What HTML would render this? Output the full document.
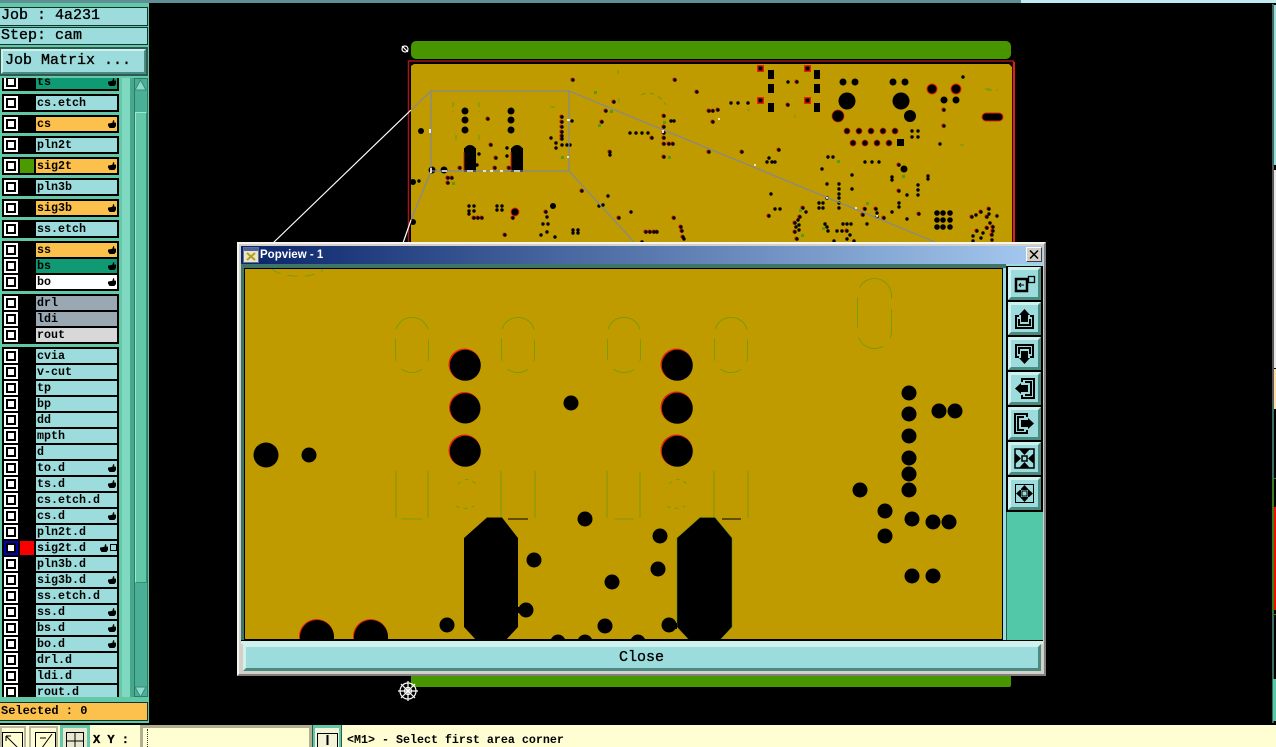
<!DOCTYPE html>
<html><head><meta charset="utf-8"><title>Popview</title>
<style>
html,body{margin:0;padding:0;width:1276px;height:747px;overflow:hidden;background:#000}
body{position:relative;font-family:"Liberation Mono",monospace;color:#000}
div{position:absolute;box-sizing:border-box}
svg{position:absolute;display:block}
.t{white-space:pre;font-size:15px;line-height:18px;-webkit-text-stroke:.35px #000}
.f{left:2px;width:117px;background:#000}
.r{left:36px;width:81px;height:14px;background:#9cdcdc;font-size:11.67px;font-weight:bold;line-height:15px;padding-left:1px;white-space:pre;overflow:hidden}
.o{background:#fcc04c}.g{background:#0f9a74}.w{background:#fff}.s{background:#9aa8b4}.l{background:#d8d8d8}
.h::after{content:"";position:absolute;right:1px;top:3px;width:8px;height:8px;background:#000;clip-path:polygon(0 45%,55% 35%,65% 0,80% 10%,75% 30%,100% 35%,100% 75%,80% 100%,20% 100%,0 70%)}
.c{left:4px;width:14px;height:14px;background:#fff;border:2px solid #fff}
.c::after{content:"";position:absolute;left:0;top:0;width:10px;height:10px;border:2px solid #000;box-sizing:border-box;background:#fff}
.b{left:1008px;width:33px;height:33px;background:#9cdcdc;border:3px solid;border-color:#cff2ee #4a8a80 #4a8a80 #cff2ee}
.b svg{left:-3px;top:-3px}
.tb{top:725px;height:22px;background:#fefed2}
</style></head>
<body>
<div style="left:0;top:0;width:1021px;height:3px;background:#5f8f94"></div>
<div style="left:1021px;top:0;width:255px;height:3px;background:#c0ecf0"></div>

<svg width="1276" height="747" viewBox="0 0 1276 747" style="left:0;top:0">
<rect x="411" y="41" width="600" height="18" rx="5" fill="#479600"/>
<rect x="411" y="670" width="600" height="17" rx="2" fill="#479600"/>
<rect x="408.5" y="61" width="605" height="190" fill="none" stroke="#a01818" stroke-width="1.500"/>
<rect x="1013" y="62" width="2" height="190" fill="#e02010"/>
<path d="M411 66 L414 64 H1009 L1012 67 V250 H411Z" fill="#c09b00"/>
<rect x="464" y="148" width="12" height="24" fill="#000"/><circle cx="470" cy="151" r="6" fill="#000"/>
<rect x="511" y="148" width="12" height="24" fill="#000"/><circle cx="517" cy="151" r="6" fill="#000"/>
<path d="M464 152V171" stroke="#d02010" fill="none"/><path d="M511 152V171" stroke="#d02010" fill="none"/>
<g fill="#e02010"><rect x="757" y="65" width="7" height="7"/><rect x="804" y="65" width="7" height="7"/><rect x="757" y="97" width="7" height="7"/><rect x="804" y="97" width="7" height="7"/></g>
<g fill="#000">
<rect x="758.500" y="66.500" width="4" height="4"/><rect x="805.500" y="66.500" width="4" height="4"/><rect x="758.500" y="98.500" width="4" height="4"/><rect x="805.500" y="98.500" width="4" height="4"/>
<rect x="768" y="70" width="6" height="9"/><rect x="768" y="84" width="6" height="9"/><rect x="768" y="103" width="6" height="9"/>
<rect x="814" y="70" width="6" height="9"/><rect x="814" y="84" width="6" height="9"/><rect x="814" y="103" width="6" height="9"/>
<rect x="897" y="139" width="7" height="7"/>
<rect x="982" y="113" width="21" height="8" rx="4" stroke="#e02010"/>
</g>
<g fill="none" stroke-linecap="round">
<path stroke="#d02a10" stroke-width="4.200" transform="translate(-.6,-.4)" d="M573 80h0M675 80h0M697 92h0M614 102h0M606 111h0M709 111h0M713 111h0M718 110h0M602 122h0M713 122h0M664 116h0M664 127h0M664 133h0M664 138h0M664 144h0M669 144h0M673 144h0M664 157h0M652 138h0M610 152h0M709 152h0M488 119h0M562 117h0M562 122h0M562 127h0M562 132h0M562 136h0M562 139h0M491 145h0M496 158h0M460 168h0M495 168h0M509 168h0M448 178h0M452 178h0M448 183h0M474 218h0M478 218h0M482 218h0M513 218h0M546 212h0M505 235h0M582 191h0M619 218h0M674 218h0M681 227h0M682 231h0M683 237h0M646 232h0M650 232h0M654 232h0M657 232h0M797 82h0M788 105h0M944 110h0M944 126h0M742 152h0M779 150h0M769 216h0M803 208h0M800 217h0M795 223h0M795 232h0M797 239h0M899 165h0M899 191h0M919 214h0M876 209h0M865 209h0M863 215h0M884 218h0M847 231h0M972 217h0M981 212h0M989 209h0M987 217h0M993 227h0M987 228h0M993 231h0M992 235h0M977 231h0"/>
<path stroke="#000" stroke-width="3.400" d="M573 80h0M675 80h0M697 92h0M614 102h0M606 111h0M709 111h0M713 111h0M718 110h0M602 122h0M713 122h0M671 121h0M674 121h0M664 116h0M664 127h0M664 133h0M664 138h0M664 144h0M669 144h0M673 144h0M664 157h0M630 133h0M636 133h0M642 133h0M648 133h0M652 138h0M610 152h0M610 155h0M709 152h0M488 119h0M562 117h0M562 122h0M562 127h0M562 132h0M562 136h0M562 139h0M572 121h0M551 138h0M556 143h0M556 148h0M562 145h0M567 145h0M570 145h0M491 145h0M507 148h0M479 154h0M507 156h0M496 158h0M477 165h0M460 168h0M495 168h0M509 168h0M448 178h0M452 178h0M448 183h0M419 181h0M469 206h0M474 206h0M469 211h0M474 211h0M469 214h0M474 218h0M478 218h0M482 218h0M497 206h0M502 206h0M497 210h0M502 210h0M513 218h0M546 212h0M547 217h0M543 224h0M548 224h0M547 232h0M541 235h0M555 237h0M573 230h0M578 230h0M573 233h0M578 233h0M505 235h0M582 191h0M608 196h0M599 206h0M603 205h0M631 212h0M619 218h0M674 218h0M681 227h0M682 231h0M683 237h0M684 239h0M646 232h0M650 232h0M654 232h0M657 232h0M642 242h0M788 82h0M797 82h0M731 103h0M738 103h0M748 103h0M788 105h0M963 77h0M944 110h0M944 126h0M940 144h0M912 131h0M918 131h0M912 137h0M918 137h0M742 152h0M779 150h0M769 158h0M767 162h0M772 162h0M775 162h0M828 157h0M833 157h0M822 169h0M865 162h0M872 162h0M879 162h0M852 175h0M827 184h0M839 184h0M839 189h0M839 194h0M839 198h0M839 203h0M839 208h0M852 189h0M771 194h0M827 198h0M819 203h0M823 203h0M819 208h0M823 208h0M775 209h0M780 209h0M769 216h0M803 208h0M806 212h0M800 217h0M798 220h0M799 225h0M795 223h0M796 227h0M795 232h0M799 230h0M797 239h0M899 165h0M892 177h0M892 180h0M928 176h0M928 179h0M899 191h0M907 195h0M918 185h0M918 190h0M918 195h0M899 203h0M899 207h0M892 212h0M907 219h0M919 214h0M876 209h0M877 213h0M877 217h0M865 209h0M863 215h0M884 218h0M867 224h0M825 224h0M827 227h0M828 231h0M843 224h0M847 224h0M851 224h0M837 231h0M842 231h0M847 231h0M850 235h0M847 239h0M854 241h0M834 241h0M972 217h0M976 215h0M981 212h0M989 209h0M989 214h0M987 217h0M990 223h0M993 227h0M987 228h0M993 231h0M992 235h0M992 240h0M983 233h0M977 231h0M973 236h0M973 241h0M981 238h0M997 216h0"/>
</g>
<g fill="#000">
<circle cx="465" cy="111" r="3.5"/><circle cx="465" cy="120" r="3.5"/><circle cx="465" cy="130" r="3.5"/>
<circle cx="511" cy="111" r="3.5"/><circle cx="511" cy="120" r="3.5"/><circle cx="511" cy="130" r="3.5"/>
<circle cx="421" cy="131" r="3"/><circle cx="432" cy="170" r="3.5"/><circle cx="444" cy="170" r="3.5"/>
<circle cx="413" cy="182" r="3"/><circle cx="413" cy="222" r="3"/><circle cx="553" cy="206" r="3"/>
<circle cx="515" cy="212" r="4" stroke="#e02010"/>
<circle cx="843" cy="82" r="3.5"/><circle cx="855" cy="82" r="3.5"/><circle cx="893" cy="82" r="3.5"/><circle cx="905" cy="82" r="3.5"/>
<circle cx="847" cy="101" r="8.5"/><circle cx="901" cy="101" r="8.5"/>
<circle cx="838" cy="116" r="6" stroke="#d02010" stroke-width=".7"/><circle cx="910" cy="116" r="6"/>
<circle cx="932" cy="89" r="5" stroke="#e02010"/><circle cx="956" cy="89" r="5" stroke="#e02010"/>
<circle cx="944" cy="100" r="3.5"/><circle cx="956" cy="100" r="3.5"/>
<g stroke="#d02010" stroke-width=".8"><circle cx="847" cy="131" r="3"/><circle cx="859" cy="131" r="3"/><circle cx="871" cy="131" r="3"/><circle cx="883" cy="131" r="3"/><circle cx="895" cy="131" r="3"/>
<circle cx="853" cy="143" r="3"/><circle cx="865" cy="143" r="3"/><circle cx="877" cy="143" r="3"/><circle cx="889" cy="143" r="3"/></g>
<circle cx="904" cy="169" r="3.5"/>
<circle cx="937" cy="213" r="2.8"/><circle cx="943" cy="213" r="2.8"/><circle cx="950" cy="213" r="2.8"/><circle cx="937" cy="220" r="2.8"/><circle cx="943" cy="220" r="2.8"/><circle cx="950" cy="220" r="2.8"/><circle cx="937" cy="227" r="2.8"/><circle cx="943" cy="227" r="2.8"/><circle cx="950" cy="227" r="2.8"/>
</g>
<g fill="#5a9a10"><rect x="594" y="91" width="3" height="3"/><rect x="610" y="110" width="3" height="3"/><rect x="598" y="124" width="3" height="3"/><rect x="561" y="156" width="3" height="3"/><rect x="668" y="156" width="3" height="3"/><rect x="663" y="121" width="3" height="3"/><rect x="452" y="182" width="3" height="3"/><rect x="837" y="160" width="3" height="3"/><rect x="902" y="175" width="3" height="3"/><rect x="866" y="202" width="3" height="3"/><rect x="799" y="209" width="3" height="3"/><rect x="801" y="234" width="3" height="3"/><rect x="822" y="227" width="3" height="3"/></g>
<g fill="none" stroke="#6a9a10" stroke-dasharray="5 4">
<path d="M453 102V112M479 102V112M456 135V143M479 135V143M618 70V74M641 95C650 90 660 95 666 105M619 98V104M985 89H990M987 90H998M960 145H964M747 110H750M795 115V118M550 107H555"/>
</g>
<g fill="none" stroke="#808898" stroke-width="1.2">
<rect x="431" y="91" width="138" height="80"/>
<path d="M569 91L935 242M569 171L635 243M431 91L411 110M431 171L411 220"/>
</g>
<g fill="none" stroke="#fff" stroke-width="1.2"><path d="M411 110L273 243M411 220L403 243"/></g>
<path d="M430 129v4M431 168v5M442 171h5M467 171h6M483 171h3M490 171h3M500 171h3M514 171h6M567 120h3M567 157h2M718 119h2M663 130v3M754 165h2M826 198h2M855 208h2M876 216h2" stroke="#fff" stroke-width="1.6" fill="none"/>
<g fill="none" stroke="#fff" stroke-width="1.2"><circle cx="405" cy="49" r="3"/><path d="M402 46l6 6"/>
<circle cx="408" cy="691" r="8"/><circle cx="408" cy="691" r="3.5"/><path d="M408 681v20M398 691h20M401 684l14 14M415 684l-14 14"/></g>
</svg>

<!-- right strip -->
<div style="left:1272px;top:4px;width:2px;height:719px;background:#3d6b62"></div>
<div style="left:1274px;top:5px;width:2px;height:160px;background:#9cdcdc"></div>
<div style="left:1272px;top:166px;width:2px;height:238px;background:#5a5a5a"></div>
<div style="left:1274px;top:170px;width:2px;height:198px;background:#e8e8e8"></div>
<div style="left:1274px;top:369px;width:2px;height:40px;background:#ffe0a8"></div>
<div style="left:1272px;top:478px;width:2px;height:135px;background:#3f7a20"></div>
<div style="left:1274px;top:507px;width:2px;height:103px;background:#f01000"></div>
<div style="left:1274px;top:478px;width:2px;height:1px;background:#3f7a20"></div>
<div style="left:1274px;top:614px;width:2px;height:1px;background:#3f7a20"></div>
<div style="left:1273px;top:679px;width:3px;height:42px;background:#55c8a8"></div>

<!-- sidebar -->
<div style="left:0;top:3px;width:149px;height:720px;background:#62c8a8;overflow:hidden">
<div style="left:0;top:4px;width:148px;height:19px;background:#9cdcdc;border:1px solid #12332c;border-left:0"></div>
<div style="left:0;top:24px;width:148px;height:18px;background:#9cdcdc;border:1px solid #12332c;border-left:0"></div>
<div style="left:0;top:44px;width:148px;height:29px;background:#2c5a50"></div>
<div style="left:1px;top:46px;width:145px;height:25px;background:#9cdcdc;border:2px solid;border-color:#cff2ee #4a8a80 #4a8a80 #cff2ee"></div>
</div>
<div class="t" style="left:1px;top:7px">Job : 4a231</div>
<div class="t" style="left:1px;top:27px">Step: cam</div>
<div class="t" style="left:5px;top:52px">Job Matrix ...</div>

<!-- scrollbar -->
<div style="left:122px;top:78px;width:8px;height:619px;background:#7fd8c0"></div>
<div style="left:130px;top:78px;width:4px;height:619px;background:#48a88c"></div>
<div style="left:134px;top:78px;width:14px;height:619px;background:#4aaf94;border:1px solid #2a7a68"></div>
<div style="left:135px;top:112px;width:12px;height:471px;background:#62c8a8;border:1px solid;border-color:#9ce8d4 #3a8a78 #3a8a78 #9ce8d4"></div>
<svg width="149" height="700" style="left:0;top:0"><path d="M135 90L140.500 80L146 90Z" fill="#8adccc" stroke="#3a8a78"/><path d="M135 687L140.500 697L146 687Z" fill="#8adccc" stroke="#3a8a78"/></svg>

<!-- layer list -->
<div style="left:0;top:78px;width:120px;height:619px;overflow:hidden">
<div style="left:0;top:-78px;width:120px;height:697px">
<div class="f" style="top:73px;height:18px"></div>
<div class="f" style="top:94px;height:18px"></div>
<div class="f" style="top:115px;height:18px"></div>
<div class="f" style="top:136px;height:18px"></div>
<div class="f" style="top:157px;height:18px"></div>
<div class="f" style="top:178px;height:18px"></div>
<div class="f" style="top:199px;height:18px"></div>
<div class="f" style="top:220px;height:18px"></div>
<div class="f" style="top:241px;height:50px"></div>
<div class="f" style="top:294px;height:50px"></div>
<div class="f" style="top:347px;height:350px"></div>

<div class="c" style="top:75px"></div><div class="r g h" style="top:75px">ts</div>
<div class="c" style="top:96px"></div><div class="r" style="top:96px">cs.etch</div>
<div class="c" style="top:117px"></div><div class="r o h" style="top:117px">cs</div>
<div class="c" style="top:138px"></div><div class="r" style="top:138px">pln2t</div>
<div class="c" style="top:159px"></div><div style="left:20px;top:159px;width:14px;height:14px;background:#4a9a00"></div><div class="r o h" style="top:159px">sig2t</div>
<div class="c" style="top:180px"></div><div class="r" style="top:180px">pln3b</div>
<div class="c" style="top:201px"></div><div class="r o h" style="top:201px">sig3b</div>
<div class="c" style="top:222px"></div><div class="r" style="top:222px">ss.etch</div>
<div class="c" style="top:243px"></div><div class="r o h" style="top:243px">ss</div>
<div class="c" style="top:259px"></div><div class="r g h" style="top:259px">bs</div>
<div class="c" style="top:275px"></div><div class="r w h" style="top:275px">bo</div>
<div class="c" style="top:296px"></div><div class="r s" style="top:296px">drl</div>
<div class="c" style="top:312px"></div><div class="r s" style="top:312px">ldi</div>
<div class="c" style="top:328px"></div><div class="r l" style="top:328px">rout</div>
<div class="c" style="top:349px"></div><div class="r" style="top:349px">cvia</div>
<div class="c" style="top:365px"></div><div class="r" style="top:365px">v-cut</div>
<div class="c" style="top:381px"></div><div class="r" style="top:381px">tp</div>
<div class="c" style="top:397px"></div><div class="r" style="top:397px">bp</div>
<div class="c" style="top:413px"></div><div class="r" style="top:413px">dd</div>
<div class="c" style="top:429px"></div><div class="r" style="top:429px">mpth</div>
<div class="c" style="top:445px"></div><div class="r" style="top:445px">d</div>
<div class="c" style="top:461px"></div><div class="r h" style="top:461px">to.d</div>
<div class="c" style="top:477px"></div><div class="r h" style="top:477px">ts.d</div>
<div class="c" style="top:493px"></div><div class="r" style="top:493px">cs.etch.d</div>
<div class="c" style="top:509px"></div><div class="r h" style="top:509px">cs.d</div>
<div class="c" style="top:525px"></div><div class="r" style="top:525px">pln2t.d</div>
<div class="c" style="top:541px;border-color:#0000b0"></div><div style="left:20px;top:541px;width:14px;height:14px;background:#f80000"></div><div class="r" style="top:541px">sig2t.d<span style="position:absolute;left:64px;top:3px;width:8px;height:8px;background:#000;clip-path:polygon(0 45%,55% 35%,65% 0,80% 10%,75% 30%,100% 35%,100% 75%,80% 100%,20% 100%,0 70%)"></span><span style="position:absolute;left:74px;top:3px;width:7px;height:7px;border:1px solid #000;box-sizing:border-box"></span></div>
<div class="c" style="top:557px"></div><div class="r" style="top:557px">pln3b.d</div>
<div class="c" style="top:573px"></div><div class="r h" style="top:573px">sig3b.d</div>
<div class="c" style="top:589px"></div><div class="r" style="top:589px">ss.etch.d</div>
<div class="c" style="top:605px"></div><div class="r h" style="top:605px">ss.d</div>
<div class="c" style="top:621px"></div><div class="r h" style="top:621px">bs.d</div>
<div class="c" style="top:637px"></div><div class="r h" style="top:637px">bo.d</div>
<div class="c" style="top:653px"></div><div class="r" style="top:653px">drl.d</div>
<div class="c" style="top:669px"></div><div class="r" style="top:669px">ldi.d</div>
<div class="c" style="top:685px;height:12px"></div><div class="r" style="top:685px;height:12px">rout.d</div>
</div></div>

<div style="left:0;top:702px;width:148px;height:19px;background:#fcc04c;border:1px solid #12332c;border-left:0;font-size:12px;font-weight:bold;line-height:17px;padding-left:1px;white-space:pre">Selected : 0</div>

<!-- bottom bar -->
<div class="tb" style="left:0;width:90px;background:#fefed2"></div>
<div class="tb" style="left:60px;width:30px;background:#62c8a8"></div>
<div class="tb" style="left:63px;top:728px;height:19px;width:24px;background:#e8e8d0"></div>
<div class="tb" style="left:90px;width:50px"></div>
<div class="t" style="left:93px;top:733px;font-size:12px;font-weight:bold;line-height:14px">X Y :</div>
<div class="tb" style="left:140px;width:172px;background:#fefed2;border:3px solid #b0b090;border-bottom:0"></div>
<div class="tb" style="left:312px;width:30px;background:#62c8a8;border-left:1px solid #2a5a50;border-right:1px solid #2a5a50"></div>
<div class="tb" style="left:315px;top:728px;height:19px;width:24px;background:#f4f4d8"></div>
<div class="tb" style="left:342px;width:930px"></div>
<div class="tb" style="left:1272px;width:4px"></div>
<svg width="345" height="22" viewBox="0 725 345 22" style="left:0;top:725px">
<g fill="none" stroke="#b8b8a0" stroke-width="2"><rect x="1" y="727" width="24" height="24"/><rect x="30" y="727" width="27" height="24"/></g>
<g fill="none" stroke="#000">
<rect x="2.500" y="732.500" width="20" height="20"/><path d="M6 736L19 749M6 736h5M6 736v5"/>
<rect x="35.500" y="732.500" width="20" height="20"/><path d="M39 752L52 734M40 738h6M47 748h5"/>
<rect x="66.500" y="732.500" width="17" height="20"/><path d="M75 733V752M67 741H84"/>
<rect x="317.500" y="733.500" width="20" height="20"/><path d="M327.500 735V745M327.500 747V749" stroke-width="2"/>
</g></svg>
<div style="left:147px;top:729px;width:1px;height:18px;border-left:1px dotted #333"></div>
<div class="t" style="left:347px;top:733px;font-size:11.67px;font-weight:bold;line-height:14px;-webkit-text-stroke:0">&lt;M1&gt; - Select first area corner</div>

<!-- Popview window -->
<div style="left:237px;top:242px;width:809px;height:434px;background:#d4d0c8;border:2px solid;border-color:#f4f4f0 #808080 #808080 #f4f4f0"></div>
<div style="left:241px;top:246px;width:802px;height:18px;background:linear-gradient(90deg,#0a246a,#a6caf0)"></div>
<svg width="16" height="16" viewBox="0 0 16 16" style="left:243px;top:247px"><rect x=".5" y=".5" width="15" height="15" fill="#e8e4c8" stroke="#6070a0"/><rect x="1" y="1" width="14" height="3" fill="#5060a0"/><path d="M4 6L12 13M12 6L4 13" stroke="#b0a020" stroke-width="2"/></svg>
<div style="left:260px;top:247px;font-family:'Liberation Sans',sans-serif;font-size:11.500px;font-weight:bold;line-height:16px;color:#fff;white-space:pre">Popview - 1</div>
<div style="left:1026px;top:247px;width:16px;height:15px;background:#d4d0c8;border:1px solid;border-color:#fff #404040 #404040 #fff"></div>
<svg width="16" height="15" viewBox="0 0 16 15" style="left:1026px;top:247px"><path d="M4 3.500L12 11.500M12 3.500L4 11.500" stroke="#000" stroke-width="1.500"/></svg>

<div style="left:241px;top:264px;width:802px;height:378px;background:#9cdcdc"></div>
<div style="left:241px;top:264px;width:765px;height:4px;background:#3f7468"></div>
<div style="left:241px;top:264px;width:3px;height:378px;background:#3f7468"></div>
<div style="left:244px;top:268px;width:759px;height:372px;border:1px solid #000;background:#c09b00"></div>

<svg width="757" height="370" viewBox="245 269 757 370" style="left:245px;top:269px">
<rect x="245" y="269" width="757" height="370" fill="#c09b00"/>
<g fill="none" stroke="#6a9a10" stroke-width=".8">
<path stroke-dasharray="10 7" d="M272 269C280 277 310 280 323 270"/>
<rect x="395.500" y="317.500" width="33" height="55" rx="16" stroke-dasharray="22 10"/>
<rect x="501.500" y="317.500" width="33" height="55" rx="16" stroke-dasharray="22 10"/>
<rect x="607.500" y="317.500" width="33" height="55" rx="16" stroke-dasharray="22 10"/>
<rect x="714.500" y="317.500" width="33" height="55" rx="16" stroke-dasharray="22 10"/>
<rect x="857.500" y="278.500" width="34" height="70" rx="17" stroke-dasharray="30 10"/>
<path d="M396 471V518M428 471V518M401 519H422M501 471V518M535 471V518M607 471V518M640 471V518M614 519H634M714 471V518M748 471V518"/>
<path stroke-dasharray="4 4" d="M456 506C460 509 470 509 474 506M667 506C671 509 681 509 685 506M458 484C464 478 470 478 476 484M669 484C675 478 681 478 687 484"/>
</g>
<path d="M508 519H528M722 519H741" stroke="#000"/>
<g fill="#e02010"><circle cx="464.500" cy="364.500" r="16"/><circle cx="464.500" cy="450.500" r="16"/><circle cx="676.500" cy="364.500" r="16"/><circle cx="676.500" cy="407.500" r="16"/><circle cx="676.500" cy="450.500" r="16"/><circle cx="464.500" cy="407.500" r="15.500"/><circle cx="316.500" cy="636.500" r="17.500"/><circle cx="370.500" cy="636.500" r="17.500"/></g>
<g fill="#000">
<circle cx="465.300" cy="365.300" r="15.500"/><circle cx="465.300" cy="408.300" r="15.200"/><circle cx="465.300" cy="451.300" r="15.500"/><circle cx="677.300" cy="365.300" r="15.500"/><circle cx="677.300" cy="408.300" r="15.500"/><circle cx="677.300" cy="451.300" r="15.500"/>
<circle cx="571" cy="403" r="7.500"/><circle cx="266" cy="455" r="12.500"/><circle cx="309" cy="455" r="7.500"/>
<circle cx="909" cy="393" r="7.500"/><circle cx="909" cy="414" r="7.500"/><circle cx="909" cy="436" r="7.500"/><circle cx="909" cy="458" r="7.500"/><circle cx="909" cy="474" r="7.500"/><circle cx="909" cy="490" r="7.500"/>
<circle cx="939" cy="411" r="7.500"/><circle cx="955" cy="411" r="7.500"/><circle cx="860" cy="490" r="7.500"/><circle cx="885" cy="511" r="7.500"/><circle cx="885" cy="536" r="7.500"/>
<circle cx="912" cy="519" r="7.500"/><circle cx="933" cy="522" r="7.500"/><circle cx="949" cy="522" r="7.500"/><circle cx="912" cy="576" r="7.500"/><circle cx="933" cy="576" r="7.500"/>
<circle cx="585" cy="519" r="7.500"/><circle cx="534" cy="560" r="7.500"/><circle cx="660" cy="536" r="7.500"/><circle cx="658" cy="569" r="7.500"/><circle cx="612" cy="582" r="7.500"/>
<circle cx="526" cy="610" r="7.500"/><circle cx="447" cy="625" r="7.500"/><circle cx="605" cy="626" r="7.500"/><circle cx="669" cy="625" r="7.500"/>
<circle cx="558" cy="642" r="7.500"/><circle cx="585" cy="642" r="7.500"/><circle cx="638" cy="642" r="7.500"/>
<circle cx="317" cy="637" r="17"/><circle cx="371" cy="637" r="17"/>
<path d="M487 517.500H502L518 538V627L504 642H478L464 627V538Z"/>
<path d="M700 517.500H715L732 538V627L718 642H691L677 627V538Z" stroke="#4a8a10" stroke-width=".5"/>
<path d="M518 607h6v6h-6zM677 623h-8v6h8z"/>
</g>
</svg>

<!-- toolbar -->
<div style="left:1006px;top:266px;width:37px;height:246px;background:#000"></div>
<div style="left:1006px;top:512px;width:37px;height:130px;background:#52c8a8;border-left:1px solid #2a5a50"></div>

<div class="b" style="top:267px"><svg width="33" height="33" viewBox="0 0 33 33"><rect x="8" y="12" width="11" height="12" fill="none" stroke="#000" stroke-width="2.500"/><path d="M16 18H11M13 16l-2 2 2 2" fill="none" stroke="#000"/><rect x="20.500" y="9.500" width="6" height="6" fill="none" stroke="#000" stroke-width="1.300"/></svg></div>
<div class="b" style="top:302px"><svg width="33" height="33" viewBox="0 0 33 33"><path d="M11 14H8V26H25V14H22M11 17V23H22V17" fill="none" stroke="#000" stroke-width="2"/><path d="M16.500 7L22 13H20V20H13V13H11Z"/></svg></div>
<div class="b" style="top:337px"><svg width="33" height="33" viewBox="0 0 33 33"><path d="M11 20H8V8H25V20H22M11 17V11H22V17" fill="none" stroke="#000" stroke-width="2"/><path d="M16.500 27L22 21H20V14H13V21H11Z"/></svg></div>
<div class="b" style="top:372px"><svg width="33" height="33" viewBox="0 0 33 33"><path d="M14 10V7H26V26H14V23M17 10H23V23H17" fill="none" stroke="#000" stroke-width="2"/><path d="M7 16.500L13 11V13H20V20H13V22Z"/></svg></div>
<div class="b" style="top:407px"><svg width="33" height="33" viewBox="0 0 33 33"><path d="M19 10V7H7V26H19V23M16 10H10V23H16" fill="none" stroke="#000" stroke-width="2"/><path d="M26 16.500L20 11V13H13V20H20V22Z"/></svg></div>
<div class="b" style="top:442px"><svg width="33" height="33" viewBox="0 0 33 33"><rect x="7" y="7" width="19" height="19" fill="none" stroke="#000" stroke-width="1.500"/><rect x="14" y="14" width="5" height="5" fill="none" stroke="#000" stroke-width="1.500"/><path d="M16.500 13L11 7H22ZM16.500 20L11 26H22ZM13 16.500L7 11V22ZM20 16.500L26 11V22Z"/></svg></div>
<div class="b" style="top:477px"><svg width="33" height="33" viewBox="0 0 33 33"><rect x="7.500" y="7.500" width="18" height="18" fill="none" stroke="#000"/><rect x="14" y="14" width="5" height="5" fill="none" stroke="#000"/><path d="M16.500 8L12 13H21ZM16.500 25L12 20H21ZM8 16.500L13 12V21ZM25 16.500L20 12V21Z"/></svg></div>

<!-- Close -->
<div style="left:241px;top:640px;width:802px;height:1px;background:#000"></div>
<div style="left:241px;top:641px;width:802px;height:3px;background:#cff2ee"></div>
<div style="left:241px;top:671px;width:802px;height:2px;background:#d4d0c8"></div>
<div style="left:243px;top:644px;width:798px;height:27px;background:#9cdcdc;border:3px solid;border-color:#cff2ee #4a8a80 #4a8a80 #cff2ee"></div>
<div class="t" style="left:619px;top:649px;line-height:18px">Close</div>
</body></html>
